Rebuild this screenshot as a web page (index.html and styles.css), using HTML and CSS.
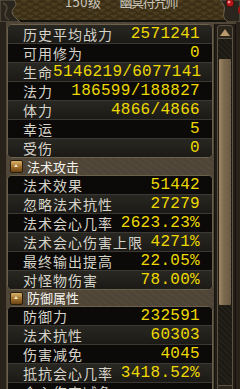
FILE: index.html
```html
<!DOCTYPE html>
<html lang="zh">
<head>
<meta charset="utf-8">
<link rel="stylesheet" href="styles.css">
</head>
<body>
<div class="window">
  <div class="titlebar">
    <svg class="orn orn-left" width="22" height="22" viewBox="0 0 22 22">
      <path d="M0 0 H14 Q18 4 14 8 Q10 12 14 16 L20 22 H0 Z" fill="#2a251d" stroke="#6b604c" stroke-width="1"/>
      <path d="M3 3 Q9 6 6 11 Q3 16 9 20" fill="none" stroke="#524838" stroke-width="1.5"/>
    </svg>
    <div class="title"><span class="lvl">150级</span><span class="name">幽冥符咒师</span></div>
    <svg class="orn orn-right" width="24" height="22" viewBox="0 0 24 22">
      <path d="M24 0 V22 H12 Q6 18 8 12 Q10 6 4 0 Z" fill="#2a251d" stroke="#6b604c" stroke-width="1"/>
      <circle cx="14" cy="3" r="4" fill="#b41818" stroke="#3a1010" stroke-width="1"/>
      <circle cx="13" cy="2" r="1.3" fill="#ff9a9a"/>
      <path d="M22 8 L24 6 V14 L22 12 Z" fill="#9a1414"/>
    </svg>
  </div>
  <div class="main">
    <div class="list">
      <div class="box">
        <div class="row light"><span class="k">历史平均战力</span><span class="v">2571241</span></div>
        <div class="row dark"><span class="k">可用修为</span><span class="v">0</span></div>
        <div class="row light"><span class="k">生命</span><span class="v">5146219/6077141</span></div>
        <div class="row dark"><span class="k">法力</span><span class="v">186599/188827</span></div>
        <div class="row light"><span class="k">体力</span><span class="v">4866/4866</span></div>
        <div class="row dark"><span class="k">幸运</span><span class="v">5</span></div>
        <div class="row light"><span class="k">受伤</span><span class="v">0</span></div>
      </div>
      <div class="section s1"><span class="sicon"></span><span class="stitle">法术攻击</span></div>
      <div class="box">
        <div class="row dark"><span class="k">法术效果</span><span class="v">51442</span></div>
        <div class="row light"><span class="k">忽略法术抗性</span><span class="v">27279</span></div>
        <div class="row dark"><span class="k">法术会心几率</span><span class="v">2623.23%</span></div>
        <div class="row light"><span class="k">法术会心伤害上限</span><span class="v">4271%</span></div>
        <div class="row dark"><span class="k">最终输出提高</span><span class="v">22.05%</span></div>
        <div class="row light"><span class="k">对怪物伤害</span><span class="v">78.00%</span></div>
      </div>
      <div class="section s2"><span class="sicon"></span><span class="stitle">防御属性</span></div>
      <div class="box">
        <div class="row dark"><span class="k">防御力</span><span class="v">232591</span></div>
        <div class="row light"><span class="k">法术抗性</span><span class="v">60303</span></div>
        <div class="row dark"><span class="k">伤害减免</span><span class="v">4045</span></div>
        <div class="row light"><span class="k">抵抗会心几率</span><span class="v">3418.52%</span></div>
        <div class="row dark"><span class="k">会心伤害减免</span><span class="v"></span></div>
      </div>
    </div>
    <div class="scrollbar">
      <div class="sb-btn up"><span class="tri-up"></span></div>
      <div class="track">
        <div class="thumb"></div>
      </div>
      <div class="sb-btn down"><span class="tri-down"></span></div>
    </div>
  </div>
</div>
</body>
</html>
```
FILE: styles.css
```css
html, body {
  margin: 0;
  padding: 0;
}
body {
  width: 240px;
  height: 389px;
  overflow: hidden;
  background: #1d1912;
  font-family: "Noto Sans CJK SC", sans-serif;
}
.window {
  position: relative;
  width: 240px;
  height: 389px;
  overflow: hidden;
  display: flex;
  flex-direction: column;
}
.titlebar {
  position: relative;
  height: 20px;
  flex: none;
  border-bottom: 2px solid #16120c;
  background:
    radial-gradient(circle at 50% 100%, transparent 4px, #3a2e16 4.5px, #3a2e16 5.5px, transparent 6px) 0 0 / 12px 6px,
    radial-gradient(circle at 50% 100%, transparent 4px, #3a2e16 4.5px, #3a2e16 5.5px, transparent 6px) 6px 3px / 12px 6px,
    #4b3d1f;
  display: flex;
  justify-content: center;
}
.orn {
  position: absolute;
  top: 0;
}
.orn-left { left: 0; }
.orn-right { right: 0; }
.title {
  margin-top: -5px;
  height: 14px;
  line-height: 14px;
  color: #c9c6bc;
  font-size: 13px;
  display: flex;
  gap: 18px;
  padding-left: 2px;
}
.lvl {
  letter-spacing: 0.5px;
}
.name {
  letter-spacing: -1.5px;
}
.main {
  flex: 1;
  display: flex;
  gap: 1px;
  padding-top: 2px;
  padding-left: 1px;
  border-left: 6px solid #28221a;
  border-right: 4px solid #28221a;
  background:
    repeating-linear-gradient(35deg, rgba(0,0,0,0.06) 0 2px, transparent 2px 5px),
    #52483a;
}
.list {
  width: 206px;
  flex: none;
  display: flex;
  flex-direction: column;
}
.box {
  border: 1px solid #6d604b;
  border-radius: 5px;
  background: #0b0a08;
  overflow: hidden;
  flex: none;
}
.row {
  height: 18px;
  display: flex;
  align-items: center;
  justify-content: space-between;
  padding: 0 12px 0 15px;
}
.row + .row {
  border-top: 1px solid #3b3931;
}
.row.light {
  background: linear-gradient(#282722, #1b1a16);
}
.row.dark {
  background: #0b0a08;
}
.k {
  color: #d6d3c9;
  font-size: 14px;
  letter-spacing: 1px;
  line-height: 16px;
  white-space: nowrap;
}
.v {
  color: #eed900;
  font-family: "Liberation Mono", monospace;
  font-size: 16px;
  letter-spacing: 0.3px;
  line-height: 16px;
  white-space: nowrap;
}
.section {
  flex: none;
  display: flex;
  align-items: center;
  gap: 4px;
  padding-left: 3px;
}
.section.s1 { height: 17px; }
.section.s2 { height: 16px; }
.sicon {
  width: 11px;
  height: 11px;
  border: 1px solid #2a1d0c;
  border-radius: 2px;
  background: linear-gradient(#d8b068, #9a6a28 60%, #6a4416);
  position: relative;
  flex: none;
}
.sicon::after {
  content: "";
  position: absolute;
  left: 3px;
  top: 3px;
  border-left: 2.5px solid transparent;
  border-right: 2.5px solid transparent;
  border-bottom: 3px solid #f4e6c0;
}
.stitle {
  color: #f4f2ec;
  font-size: 13px;
  line-height: 14px;
  letter-spacing: 0;
}
.scrollbar {
  width: 20px;
  flex: none;
  display: flex;
  flex-direction: column;
  border-left: 1px solid #15110c;
  border-right: 1px solid #15110c;
  background: #221d16;
  padding-top: 1px;
}
.sb-btn {
  height: 12px;
  flex: none;
  display: flex;
  align-items: center;
  justify-content: center;
  background: #2b251c;
  border: 1px solid #5a5142;
  border-radius: 3px 3px 0 0;
  margin: 0 2px;
}
.sb-btn.down {
  border-radius: 0 0 3px 3px;
  margin-bottom: 3px;
}
.tri-up {
  border-left: 5px solid transparent;
  border-right: 5px solid transparent;
  border-bottom: 7px solid #b89a6c;
}
.tri-down {
  border-left: 5px solid transparent;
  border-right: 5px solid transparent;
  border-top: 7px solid #b89a6c;
}
.track {
  flex: 1;
  margin: 0 2px;
  border-left: 1px solid #5a5142;
  border-right: 1px solid #5a5142;
  background:
    repeating-linear-gradient(45deg, rgba(255,255,255,0.03) 0 2px, transparent 2px 4px),
    #1c1812;
  padding: 20px 1px 0;
}
.thumb {
  height: 246px;
  background: linear-gradient(90deg, #a08866, #7c6a4e 40%, #6a5a42);
  border-radius: 1px;
}
```
